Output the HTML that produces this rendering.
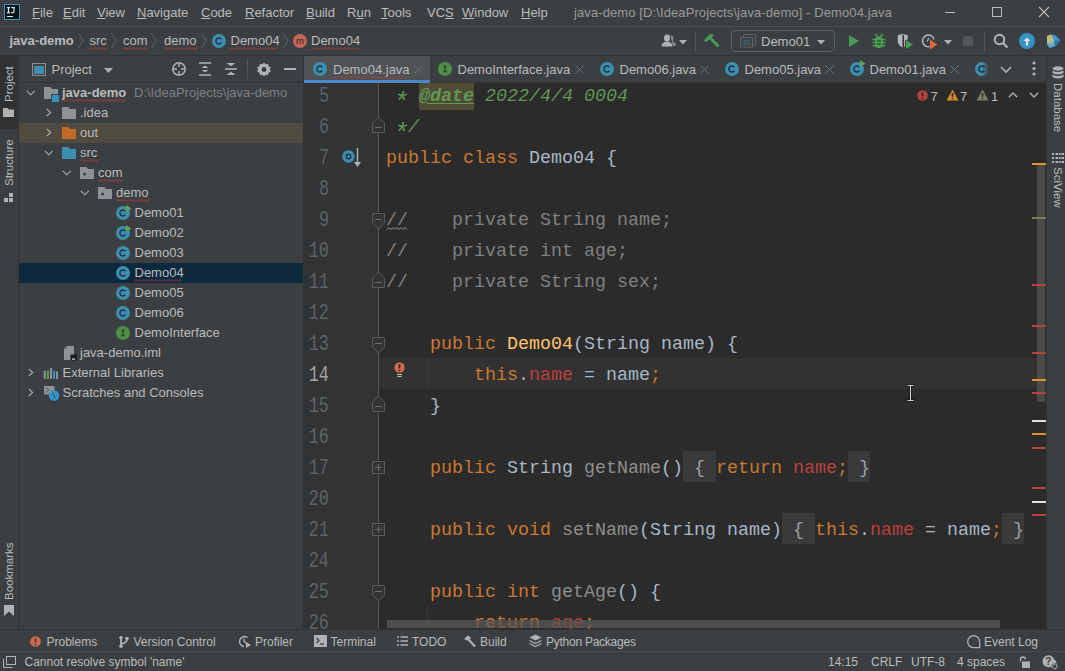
<!DOCTYPE html>
<html><head><meta charset="utf-8">
<style>
*{margin:0;padding:0;box-sizing:border-box}
html,body{width:1065px;height:671px;overflow:hidden;background:#3C3F41;font-family:"Liberation Sans",sans-serif;font-size:13px;color:#BBBBBB}
.a{position:absolute;white-space:pre}
svg.a{overflow:visible}
.mn{text-decoration:underline;text-underline-offset:1px;text-decoration-thickness:1px}
</style></head><body>
<div class="a" style="left:0px;top:0px;width:1065px;height:26px;background:#3C3F41;"></div>
<div class="a" style="left:4px;top:4px;width:16px;height:16px;background:#000;border:1px solid #3592C4"></div>
<svg class="a" style="left:4px;top:4px;" width="16" height="16" viewBox="0 0 16 16"><rect x="1" y="1" width="14" height="14" fill="#06121A"/><path d="M3 3.6h3M4.5 3.6v5M3 8.6h3M7.2 3.6h3.6M10 3.6v3.8q0 1.2-1.2 1.2h-1.6M3 12.5h6" stroke="#E6E6E6" stroke-width="1.2" fill="none"/></svg>
<div class="a" style="left:32px;top:4.50px;font-size:13px;line-height:16px;color:#BBBBBB;font-family:'Liberation Sans';"><span class="mn">F</span>ile</div>
<div class="a" style="left:63px;top:4.50px;font-size:13px;line-height:16px;color:#BBBBBB;font-family:'Liberation Sans';"><span class="mn">E</span>dit</div>
<div class="a" style="left:97px;top:4.50px;font-size:13px;line-height:16px;color:#BBBBBB;font-family:'Liberation Sans';"><span class="mn">V</span>iew</div>
<div class="a" style="left:137px;top:4.50px;font-size:13px;line-height:16px;color:#BBBBBB;font-family:'Liberation Sans';"><span class="mn">N</span>avigate</div>
<div class="a" style="left:201px;top:4.50px;font-size:13px;line-height:16px;color:#BBBBBB;font-family:'Liberation Sans';"><span class="mn">C</span>ode</div>
<div class="a" style="left:245px;top:4.50px;font-size:13px;line-height:16px;color:#BBBBBB;font-family:'Liberation Sans';"><span class="mn">R</span>efactor</div>
<div class="a" style="left:306px;top:4.50px;font-size:13px;line-height:16px;color:#BBBBBB;font-family:'Liberation Sans';"><span class="mn">B</span>uild</div>
<div class="a" style="left:347px;top:4.50px;font-size:13px;line-height:16px;color:#BBBBBB;font-family:'Liberation Sans';">R<span class="mn">u</span>n</div>
<div class="a" style="left:381px;top:4.50px;font-size:13px;line-height:16px;color:#BBBBBB;font-family:'Liberation Sans';"><span class="mn">T</span>ools</div>
<div class="a" style="left:427px;top:4.50px;font-size:13px;line-height:16px;color:#BBBBBB;font-family:'Liberation Sans';">VC<span class="mn">S</span></div>
<div class="a" style="left:462px;top:4.50px;font-size:13px;line-height:16px;color:#BBBBBB;font-family:'Liberation Sans';"><span class="mn">W</span>indow</div>
<div class="a" style="left:521px;top:4.50px;font-size:13px;line-height:16px;color:#BBBBBB;font-family:'Liberation Sans';"><span class="mn">H</span>elp</div>
<div class="a" style="left:574px;top:4.50px;font-size:13px;line-height:16px;color:#9A9A9A;font-family:'Liberation Sans';letter-spacing:0.1px;">java-demo [D:\IdeaProjects\java-demo] - Demo04.java</div>
<div class="a" style="left:945px;top:12px;width:10px;height:1px;background:#BBBBBB;"></div>
<div class="a" style="left:992px;top:7px;width:10px;height:10px;background:transparent;border:1px solid #BBBBBB"></div>
<svg class="a" style="left:1038px;top:6px;" width="12" height="12" viewBox="0 0 12 12"><path d="M1 1L11 11M11 1L1 11" stroke="#BBBBBB" stroke-width="1.1"/></svg>
<div class="a" style="left:0px;top:26px;width:1065px;height:1px;background:#4B4D4F;"></div>
<div class="a" style="left:9.5px;top:32.50px;font-size:13px;line-height:16px;color:#BBBBBB;font-weight:bold;font-family:'Liberation Sans';">java-demo</div>
<svg class="a" style="left:78px;top:33px;" width="6" height="16" viewBox="0 0 6 16"><path d="M0.5 0.5L5 7.5L0.5 15" stroke="#5E6060" stroke-width="1" fill="none"/></svg>
<svg class="a" style="left:111px;top:33px;" width="6" height="16" viewBox="0 0 6 16"><path d="M0.5 0.5L5 7.5L0.5 15" stroke="#5E6060" stroke-width="1" fill="none"/></svg>
<svg class="a" style="left:151px;top:33px;" width="6" height="16" viewBox="0 0 6 16"><path d="M0.5 0.5L5 7.5L0.5 15" stroke="#5E6060" stroke-width="1" fill="none"/></svg>
<svg class="a" style="left:201px;top:33px;" width="6" height="16" viewBox="0 0 6 16"><path d="M0.5 0.5L5 7.5L0.5 15" stroke="#5E6060" stroke-width="1" fill="none"/></svg>
<svg class="a" style="left:283px;top:33px;" width="6" height="16" viewBox="0 0 6 16"><path d="M0.5 0.5L5 7.5L0.5 15" stroke="#5E6060" stroke-width="1" fill="none"/></svg>
<div class="a" style="left:89.5px;top:32.50px;font-size:13px;line-height:16px;color:#BBBBBB;font-family:'Liberation Sans';">src</div>
<svg class="a" style="left:89px;top:47px;" width="19" height="4" viewBox="0 0 19 4"><polyline points="0,2.5 2,0.5 4,2.5 6,0.5 8,2.5 10,0.5 12,2.5 14,0.5 16,2.5 18,0.5" fill="none" stroke="#BC3F3C" stroke-width="1" opacity="0.85"/></svg>
<div class="a" style="left:123px;top:32.50px;font-size:13px;line-height:16px;color:#BBBBBB;font-family:'Liberation Sans';">com</div>
<svg class="a" style="left:123px;top:47px;" width="26" height="4" viewBox="0 0 26 4"><polyline points="0,2.5 2,0.5 4,2.5 6,0.5 8,2.5 10,0.5 12,2.5 14,0.5 16,2.5 18,0.5 20,2.5 22,0.5 24,2.5" fill="none" stroke="#BC3F3C" stroke-width="1" opacity="0.85"/></svg>
<div class="a" style="left:164px;top:32.50px;font-size:13px;line-height:16px;color:#BBBBBB;font-family:'Liberation Sans';">demo</div>
<svg class="a" style="left:164px;top:47px;" width="35" height="4" viewBox="0 0 35 4"><polyline points="0,2.5 2,0.5 4,2.5 6,0.5 8,2.5 10,0.5 12,2.5 14,0.5 16,2.5 18,0.5 20,2.5 22,0.5 24,2.5 26,0.5 28,2.5 30,0.5 32,2.5 34,0.5" fill="none" stroke="#BC3F3C" stroke-width="1" opacity="0.85"/></svg>
<svg class="a" style="left:212px;top:34px;" width="14" height="14" viewBox="0 0 14 14"><circle cx="7.0" cy="7.0" r="7.0" fill="#3E8EB0"/><path d="M9.3 5.2A3 3 0 1 0 9.3 8.8" fill="none" stroke="#1D3442" stroke-width="1.5"/></svg>
<div class="a" style="left:230.5px;top:32.50px;font-size:13px;line-height:16px;color:#BBBBBB;font-family:'Liberation Sans';">Demo04</div>
<svg class="a" style="left:230px;top:47px;" width="50" height="4" viewBox="0 0 50 4"><polyline points="0,2.5 2,0.5 4,2.5 6,0.5 8,2.5 10,0.5 12,2.5 14,0.5 16,2.5 18,0.5 20,2.5 22,0.5 24,2.5 26,0.5 28,2.5 30,0.5 32,2.5 34,0.5 36,2.5 38,0.5 40,2.5 42,0.5 44,2.5 46,0.5 48,2.5" fill="none" stroke="#BC3F3C" stroke-width="1" opacity="0.85"/></svg>
<svg class="a" style="left:293px;top:34px;" width="14" height="14" viewBox="0 0 14 14"><circle cx="7.0" cy="7.0" r="7.0" fill="#C2675A"/><text x="7.0" y="10.4" text-anchor="middle" font-family="Liberation Sans" font-size="9.5" fill="#3A2220">m</text></svg>
<div class="a" style="left:311px;top:32.50px;font-size:13px;line-height:16px;color:#BBBBBB;font-family:'Liberation Sans';">Demo04</div>
<svg class="a" style="left:311px;top:47px;" width="50" height="4" viewBox="0 0 50 4"><polyline points="0,2.5 2,0.5 4,2.5 6,0.5 8,2.5 10,0.5 12,2.5 14,0.5 16,2.5 18,0.5 20,2.5 22,0.5 24,2.5 26,0.5 28,2.5 30,0.5 32,2.5 34,0.5 36,2.5 38,0.5 40,2.5 42,0.5 44,2.5 46,0.5 48,2.5" fill="none" stroke="#BC3F3C" stroke-width="1" opacity="0.85"/></svg>
<svg class="a" style="left:661px;top:34px;" width="16" height="13" viewBox="0 0 16 13"><path d="M9.5 1.5a2.5 3 0 0 1 3 2.8q0 2-1.2 3q3.5 1 3.7 4.5h-3" fill="#8E9193"/><ellipse cx="6" cy="4" rx="3" ry="3.5" fill="#AFB1B3"/><path d="M0.5 12.5q0-4.5 5.5-5q5.5 0.5 5.5 5z" fill="#AFB1B3"/></svg>
<svg class="a" style="left:679px;top:40px;" width="8" height="5" viewBox="0 0 8 5"><path d="M0 0h8L4 4.5z" fill="#AFB1B3"/></svg>
<div class="a" style="left:695px;top:31px;width:1px;height:20px;background:#515658;"></div>
<svg class="a" style="left:703px;top:33px;" width="17" height="16" viewBox="0 0 17 16"><path d="M1 7.5L6.5 1.2H10.5V2.8L3 9.2Z" fill="#499C54"/><path d="M6.8 4.5L15.5 13.5" stroke="#499C54" stroke-width="2.8"/></svg>
<div class="a" style="left:731px;top:30px;width:104px;height:22px;background:transparent;border:1px solid #5E6060;border-radius:4px"></div>
<svg class="a" style="left:740px;top:34px;" width="16" height="14" viewBox="0 0 16 14"><path d="M3.5 3.5V0.5H15.5V11.5H12.5" stroke="#5E6163" fill="none"/><rect x="0.5" y="3.5" width="12" height="9.5" fill="none" stroke="#5E6163"/><rect x="2.5" y="5.5" width="8" height="5.5" fill="#3E5661"/></svg>
<div class="a" style="left:761px;top:33.50px;font-size:13px;line-height:16px;color:#BBBBBB;font-family:'Liberation Sans';">Demo01</div>
<svg class="a" style="left:817px;top:40px;" width="8" height="5" viewBox="0 0 8 5"><path d="M0 0h8L4 4.5z" fill="#AFB1B3"/></svg>
<svg class="a" style="left:849px;top:35px;" width="10" height="12" viewBox="0 0 10 12"><path d="M0 0L10 6L0 12z" fill="#499C54"/></svg>
<svg class="a" style="left:872px;top:33px;" width="14" height="16" viewBox="0 0 14 16"><path d="M3 1L6 4M11 1L8 4" stroke="#499C54" stroke-width="1.5"/><rect x="3" y="3.5" width="8" height="11.5" rx="3.5" fill="#499C54"/><path d="M0.5 6.5H13.5M0.5 9.5H13.5M0.5 12.8H13.5" stroke="#499C54" stroke-width="1.5"/><path d="M5 7.8H9M5 10.8H9" stroke="#2F4A33" stroke-width="1.3"/></svg>
<svg class="a" style="left:897px;top:34px;" width="17" height="16" viewBox="0 0 17 16"><path d="M0.8 1.2Q5.5 -0.5 10.8 1.2V5L8 6.5V12.5Q6 13 5 13.2Q0.8 11 0.8 7Z" fill="#B4B6B8"/><path d="M6.3 1.2V12.8" stroke="#2B2D2F" stroke-width="1.5"/><path d="M9 6L16 10.5L9 15Z" fill="#499C54"/></svg>
<svg class="a" style="left:921px;top:34px;" width="17" height="16" viewBox="0 0 17 16"><path d="M8.5 12.6A5.8 5.8 0 1 1 13 5.5" stroke="#B4B6B8" stroke-width="1.5" fill="none"/><path d="M7.8 3.8L6.2 7.5" stroke="#B4B6B8" stroke-width="1.2"/><path d="M9 5.5L16.5 10.5L9 15.5Z" fill="#D9693F"/></svg>
<svg class="a" style="left:944px;top:40px;" width="8" height="5" viewBox="0 0 8 5"><path d="M0 0h8L4 4.5z" fill="#AFB1B3"/></svg>
<div class="a" style="left:963px;top:36px;width:10px;height:10px;background:#55585A;"></div>
<div class="a" style="left:984px;top:31px;width:1px;height:20px;background:#515658;"></div>
<svg class="a" style="left:993px;top:33px;" width="16" height="16" viewBox="0 0 16 16"><circle cx="6.5" cy="6.5" r="4.8" fill="none" stroke="#B4B6B8" stroke-width="2"/><path d="M10 10L14.5 14.5" stroke="#B4B6B8" stroke-width="2.2"/></svg>
<svg class="a" style="left:1019px;top:33px;" width="16" height="16" viewBox="0 0 16 16"><circle cx="8" cy="8" r="8" fill="#3592C4"/><path d="M4.5 8L8 4.5L11.5 8Z" fill="#E6E6DF"/><path d="M8 7V12.5" stroke="#E6E6DF" stroke-width="2.2"/></svg>
<svg class="a" style="left:1046px;top:34px;" width="15" height="15" viewBox="0 0 15 15"><defs><linearGradient id="jbg" x1="0" y1="0" x2="0" y2="1"><stop offset="0" stop-color="#E9AE52"/><stop offset="0.5" stop-color="#A9C58F"/><stop offset="1" stop-color="#3E9AD6"/></linearGradient></defs><path d="M1 2L5 0.5L9 1L14.5 6.5L9 12.5L3.5 14L1 10Z" fill="#3E9AD6"/><path d="M9 6.5H14.5L9 12.5Z" fill="#2F6FA6"/><path d="M1 2L5 0.5L7.5 5V12.5L3.5 14L1 10Z" fill="url(#jbg)"/></svg>
<div class="a" style="left:0px;top:55px;width:1065px;height:1px;background:#323232;"></div>
<div class="a" style="left:0px;top:56px;width:18px;height:73px;background:#2F3133;"></div>
<div class="a" style="left:18px;top:56px;width:1px;height:573px;background:#323232;"></div>
<div class="a" style="left:3px;top:101.5px;font-size:11.5px;line-height:13.5px;color:#BBBBBB;transform-origin:0 0;transform:rotate(-90deg)">Project</div>
<svg class="a" style="left:3px;top:108px;" width="11" height="9" viewBox="0 0 11 9"><path d="M0 0h4.5l1.2 1.5H11V9H0z" fill="#AFB1B3"/></svg>
<div class="a" style="left:3px;top:186px;font-size:11.5px;line-height:13.5px;color:#BBBBBB;transform-origin:0 0;transform:rotate(-90deg)">Structure</div>
<svg class="a" style="left:4px;top:193px;" width="10" height="9" viewBox="0 0 10 9"><rect x="5" y="0" width="4" height="4" fill="#AFB1B3"/><rect x="0" y="5" width="4" height="4" fill="#AFB1B3"/><rect x="5" y="5" width="4" height="4" fill="#AFB1B3"/></svg>
<div class="a" style="left:3px;top:599.5px;font-size:11.5px;line-height:13.5px;color:#BBBBBB;transform-origin:0 0;transform:rotate(-90deg)">Bookmarks</div>
<svg class="a" style="left:4px;top:605px;" width="10" height="12" viewBox="0 0 10 12"><path d="M0 0h10v11L5 6.5L0 11z" fill="#AFB1B3"/></svg>
<svg class="a" style="left:32px;top:63px;" width="14" height="13" viewBox="0 0 14 13"><rect x="0.5" y="0.5" width="13" height="12" fill="none" stroke="#8A8D8F"/><rect x="2" y="3" width="10" height="8" fill="#3D8FAF"/></svg>
<div class="a" style="left:51.5px;top:61.50px;font-size:13px;line-height:16px;color:#BBBBBB;font-family:'Liberation Sans';">Project</div>
<svg class="a" style="left:104px;top:68px;" width="9" height="5" viewBox="0 0 9 5"><path d="M0 0h9L4.5 5z" fill="#AFB1B3"/></svg>
<svg class="a" style="left:172px;top:62px;" width="14" height="14" viewBox="0 0 14 14"><circle cx="7" cy="7" r="6.2" fill="none" stroke="#AFB1B3" stroke-width="1.5"/><path d="M7 1v4M7 9v4M1 7h4M9 7h4" stroke="#AFB1B3" stroke-width="1.5"/></svg>
<svg class="a" style="left:199px;top:62px;" width="12" height="14" viewBox="0 0 12 14"><path d="M0 1h12M0 13h12" stroke="#AFB1B3" stroke-width="1.6"/><path d="M2.5 6H9.5L6 3.5Z" fill="#AFB1B3"/><path d="M2.5 8H9.5L6 10.5Z" fill="#AFB1B3"/></svg>
<svg class="a" style="left:225px;top:62px;" width="12" height="14" viewBox="0 0 12 14"><path d="M0 7h12" stroke="#AFB1B3" stroke-width="1.6"/><path d="M1.5 1H10.5L6 4.2Z" fill="#AFB1B3"/><path d="M1.5 13H10.5L6 9.8Z" fill="#AFB1B3"/></svg>
<div class="a" style="left:247px;top:59px;width:1px;height:20px;background:#515658;"></div>
<svg class="a" style="left:257px;top:62px;" width="14" height="14" viewBox="0 0 14 14"><path d="M7 0.5L8.6 2.3L11 1.8L11.6 4.2L13.8 5.3L12.8 7.5L13.8 9.7L11.6 10.8L11 13.2L8.6 12.7L7 14.5L5.4 12.7L3 13.2L2.4 10.8L0.2 9.7L1.2 7.5L0.2 5.3L2.4 4.2L3 1.8L5.4 2.3Z" fill="#AFB1B3"/><circle cx="7" cy="7.5" r="2.4" fill="#3C3F41"/></svg>
<div class="a" style="left:284px;top:68px;width:12px;height:2px;background:#AFB1B3;"></div>
<div class="a" style="left:19px;top:82px;width:284px;height:1px;background:#323232;"></div>
<div class="a" style="left:19px;top:123px;width:284px;height:20px;background:#4F4B3F;"></div>
<div class="a" style="left:19px;top:263px;width:284px;height:20px;background:#0D293E;"></div>
<svg class="a" style="left:26px;top:90px;" width="10" height="6" viewBox="0 0 10 6"><path d="M0.8 0.8L4.8 4.8L8.8 0.8" stroke="#AFB1B3" stroke-width="1.1" fill="none"/></svg>
<svg class="a" style="left:44px;top:87px;" width="16" height="15" viewBox="0 0 16 15"><path d="M0 0h6.5l1.5 2h6v10H0z" fill="#8D9396"/><rect x="7" y="7" width="8" height="7" fill="#3C3F41"/><rect x="8" y="8" width="7" height="7" fill="#3592C4"/></svg>
<div class="a" style="left:62px;top:84.50px;font-size:13px;line-height:16px;color:#BBBBBB;font-weight:bold;font-family:'Liberation Sans';">java-demo</div>
<svg class="a" style="left:62px;top:99px;" width="66" height="4" viewBox="0 0 66 4"><polyline points="0,2.5 2,0.5 4,2.5 6,0.5 8,2.5 10,0.5 12,2.5 14,0.5 16,2.5 18,0.5 20,2.5 22,0.5 24,2.5 26,0.5 28,2.5 30,0.5 32,2.5 34,0.5 36,2.5 38,0.5 40,2.5 42,0.5 44,2.5 46,0.5 48,2.5 50,0.5 52,2.5 54,0.5 56,2.5 58,0.5 60,2.5 62,0.5 64,2.5" fill="none" stroke="#BC3F3C" stroke-width="1" opacity="0.85"/></svg>
<div class="a" style="left:134px;top:84.50px;font-size:13px;line-height:16px;color:#7F8184;font-family:'Liberation Sans';">D:\IdeaProjects\java-demo</div>
<svg class="a" style="left:46px;top:108px;" width="6" height="9" viewBox="0 0 6 9"><path d="M0.8 0.8L4.6 4.5L0.8 8.2" stroke="#AFB1B3" stroke-width="1.1" fill="none"/></svg>
<svg class="a" style="left:62px;top:107px;" width="14" height="12" viewBox="0 0 14 12"><path d="M0 0h6.5l1.5 2h6v10H0z" fill="#8D9396"/></svg>
<div class="a" style="left:80px;top:104.50px;font-size:13px;line-height:16px;color:#BBBBBB;font-family:'Liberation Sans';">.idea</div>
<svg class="a" style="left:46px;top:128px;" width="6" height="9" viewBox="0 0 6 9"><path d="M0.8 0.8L4.6 4.5L0.8 8.2" stroke="#AFB1B3" stroke-width="1.1" fill="none"/></svg>
<svg class="a" style="left:62px;top:127px;" width="14" height="12" viewBox="0 0 14 12"><path d="M0 0h6.5l1.5 2h6v10H0z" fill="#C06A2C"/></svg>
<div class="a" style="left:80px;top:124.50px;font-size:13px;line-height:16px;color:#BBBBBB;font-family:'Liberation Sans';">out</div>
<svg class="a" style="left:44px;top:150px;" width="10" height="6" viewBox="0 0 10 6"><path d="M0.8 0.8L4.8 4.8L8.8 0.8" stroke="#AFB1B3" stroke-width="1.1" fill="none"/></svg>
<svg class="a" style="left:62px;top:147px;" width="14" height="12" viewBox="0 0 14 12"><path d="M0 0h6.5l1.5 2h6v10H0z" fill="#3D8FAF"/></svg>
<div class="a" style="left:80px;top:144.50px;font-size:13px;line-height:16px;color:#BBBBBB;font-family:'Liberation Sans';">src</div>
<svg class="a" style="left:80px;top:159px;" width="19" height="4" viewBox="0 0 19 4"><polyline points="0,2.5 2,0.5 4,2.5 6,0.5 8,2.5 10,0.5 12,2.5 14,0.5 16,2.5 18,0.5" fill="none" stroke="#BC3F3C" stroke-width="1" opacity="0.85"/></svg>
<svg class="a" style="left:62px;top:170px;" width="10" height="6" viewBox="0 0 10 6"><path d="M0.8 0.8L4.8 4.8L8.8 0.8" stroke="#AFB1B3" stroke-width="1.1" fill="none"/></svg>
<svg class="a" style="left:80px;top:167px;" width="14" height="12" viewBox="0 0 14 12"><path d="M0 0h6.5l1.5 2h6v10H0z" fill="#8D9396"/><circle cx="4.5" cy="7" r="1.5" fill="#3C3F41"/></svg>
<div class="a" style="left:98px;top:164.50px;font-size:13px;line-height:16px;color:#BBBBBB;font-family:'Liberation Sans';">com</div>
<svg class="a" style="left:98px;top:179px;" width="25" height="4" viewBox="0 0 25 4"><polyline points="0,2.5 2,0.5 4,2.5 6,0.5 8,2.5 10,0.5 12,2.5 14,0.5 16,2.5 18,0.5 20,2.5 22,0.5 24,2.5" fill="none" stroke="#BC3F3C" stroke-width="1" opacity="0.85"/></svg>
<svg class="a" style="left:80px;top:190px;" width="10" height="6" viewBox="0 0 10 6"><path d="M0.8 0.8L4.8 4.8L8.8 0.8" stroke="#AFB1B3" stroke-width="1.1" fill="none"/></svg>
<svg class="a" style="left:98px;top:187px;" width="14" height="12" viewBox="0 0 14 12"><path d="M0 0h6.5l1.5 2h6v10H0z" fill="#8D9396"/><circle cx="4.5" cy="7" r="1.5" fill="#3C3F41"/></svg>
<div class="a" style="left:116px;top:184.50px;font-size:13px;line-height:16px;color:#BBBBBB;font-family:'Liberation Sans';">demo</div>
<svg class="a" style="left:116px;top:199px;" width="35" height="4" viewBox="0 0 35 4"><polyline points="0,2.5 2,0.5 4,2.5 6,0.5 8,2.5 10,0.5 12,2.5 14,0.5 16,2.5 18,0.5 20,2.5 22,0.5 24,2.5 26,0.5 28,2.5 30,0.5 32,2.5 34,0.5" fill="none" stroke="#BC3F3C" stroke-width="1" opacity="0.85"/></svg>
<svg class="a" style="left:116px;top:206px;" width="14" height="14" viewBox="0 0 14 14"><circle cx="7.0" cy="7.0" r="7.0" fill="#3E8EB0"/><path d="M9.3 5.2A3 3 0 1 0 9.3 8.8" fill="none" stroke="#1D3442" stroke-width="1.5"/></svg>
<svg class="a" style="left:126px;top:205px;" width="6" height="7" viewBox="0 0 6 7"><path d="M0 0L5.5 3.5L0 7z" fill="#5DA550"/></svg>
<div class="a" style="left:134.5px;top:204.50px;font-size:13px;line-height:16px;color:#BBBBBB;font-family:'Liberation Sans';">Demo01</div>
<svg class="a" style="left:116px;top:226px;" width="14" height="14" viewBox="0 0 14 14"><circle cx="7.0" cy="7.0" r="7.0" fill="#3E8EB0"/><path d="M9.3 5.2A3 3 0 1 0 9.3 8.8" fill="none" stroke="#1D3442" stroke-width="1.5"/></svg>
<svg class="a" style="left:126px;top:225px;" width="6" height="7" viewBox="0 0 6 7"><path d="M0 0L5.5 3.5L0 7z" fill="#5DA550"/></svg>
<div class="a" style="left:134.5px;top:224.50px;font-size:13px;line-height:16px;color:#BBBBBB;font-family:'Liberation Sans';">Demo02</div>
<svg class="a" style="left:116px;top:246px;" width="14" height="14" viewBox="0 0 14 14"><circle cx="7.0" cy="7.0" r="7.0" fill="#3E8EB0"/><path d="M9.3 5.2A3 3 0 1 0 9.3 8.8" fill="none" stroke="#1D3442" stroke-width="1.5"/></svg>
<div class="a" style="left:134.5px;top:244.50px;font-size:13px;line-height:16px;color:#BBBBBB;font-family:'Liberation Sans';">Demo03</div>
<svg class="a" style="left:116px;top:266px;" width="14" height="14" viewBox="0 0 14 14"><circle cx="7.0" cy="7.0" r="7.0" fill="#3E8EB0"/><path d="M9.3 5.2A3 3 0 1 0 9.3 8.8" fill="none" stroke="#1D3442" stroke-width="1.5"/></svg>
<div class="a" style="left:134.5px;top:264.50px;font-size:13px;line-height:16px;color:#BBBBBB;font-family:'Liberation Sans';">Demo04</div>
<svg class="a" style="left:116px;top:286px;" width="14" height="14" viewBox="0 0 14 14"><circle cx="7.0" cy="7.0" r="7.0" fill="#3E8EB0"/><path d="M9.3 5.2A3 3 0 1 0 9.3 8.8" fill="none" stroke="#1D3442" stroke-width="1.5"/></svg>
<div class="a" style="left:134.5px;top:284.50px;font-size:13px;line-height:16px;color:#BBBBBB;font-family:'Liberation Sans';">Demo05</div>
<svg class="a" style="left:116px;top:306px;" width="14" height="14" viewBox="0 0 14 14"><circle cx="7.0" cy="7.0" r="7.0" fill="#3E8EB0"/><path d="M9.3 5.2A3 3 0 1 0 9.3 8.8" fill="none" stroke="#1D3442" stroke-width="1.5"/></svg>
<div class="a" style="left:134.5px;top:304.50px;font-size:13px;line-height:16px;color:#BBBBBB;font-family:'Liberation Sans';">Demo06</div>
<svg class="a" style="left:134px;top:279px;" width="50" height="4" viewBox="0 0 50 4"><polyline points="0,2.5 2,0.5 4,2.5 6,0.5 8,2.5 10,0.5 12,2.5 14,0.5 16,2.5 18,0.5 20,2.5 22,0.5 24,2.5 26,0.5 28,2.5 30,0.5 32,2.5 34,0.5 36,2.5 38,0.5 40,2.5 42,0.5 44,2.5 46,0.5 48,2.5" fill="none" stroke="#BC3F3C" stroke-width="1" opacity="0.85"/></svg>
<svg class="a" style="left:116px;top:326px;" width="14" height="14" viewBox="0 0 14 14"><circle cx="7.0" cy="7.0" r="7.0" fill="#4E8F46"/><path d="M5.3 4.3H8.7M7 4.3V9.7M5.3 9.7H8.7" fill="none" stroke="#1E2E1E" stroke-width="1.1"/></svg>
<div class="a" style="left:134.5px;top:324.50px;font-size:13px;line-height:16px;color:#BBBBBB;font-family:'Liberation Sans';">DemoInterface</div>
<svg class="a" style="left:64px;top:346px;" width="13" height="15" viewBox="0 0 13 15"><path d="M3 0H10V14H0V3Z" fill="#8D9396"/><path d="M0 3L3 0V3Z" fill="#6E7375"/><rect x="6.5" y="8.5" width="6.5" height="6" fill="#1A1A1A"/><rect x="8" y="12.5" width="3.2" height="1.2" fill="#DDD"/></svg>
<div class="a" style="left:80px;top:344.50px;font-size:13px;line-height:16px;color:#BBBBBB;font-family:'Liberation Sans';">java-demo.iml</div>
<svg class="a" style="left:28px;top:368px;" width="6" height="9" viewBox="0 0 6 9"><path d="M0.8 0.8L4.6 4.5L0.8 8.2" stroke="#AFB1B3" stroke-width="1.1" fill="none"/></svg>
<svg class="a" style="left:43px;top:365px;" width="15" height="14" viewBox="0 0 15 14"><path d="M1.8 5.5V14M8 3V14M14 6.5V14" stroke="#8D9396" stroke-width="2"/><path d="M4.9 5.5V14" stroke="#5DA550" stroke-width="2"/><path d="M11 5.5V14" stroke="#3592C4" stroke-width="2"/></svg>
<div class="a" style="left:62.5px;top:364.50px;font-size:13px;line-height:16px;color:#BBBBBB;font-family:'Liberation Sans';">External Libraries</div>
<svg class="a" style="left:28px;top:388px;" width="6" height="9" viewBox="0 0 6 9"><path d="M0.8 0.8L4.6 4.5L0.8 8.2" stroke="#AFB1B3" stroke-width="1.1" fill="none"/></svg>
<svg class="a" style="left:43px;top:386px;" width="17" height="16" viewBox="0 0 17 16"><rect x="1" y="0" width="10.5" height="8.5" fill="#8D9396"/><path d="M2.5 1.5L6 4L2.5 6.5" stroke="#5A5E60" stroke-width="1" fill="none"/><circle cx="11" cy="9.5" r="5.2" fill="#3592C4"/><path d="M10 7.5L11.5 11L12.5 11.5" stroke="#1F4F73" stroke-width="1" fill="none"/></svg>
<div class="a" style="left:62.5px;top:384.50px;font-size:13px;line-height:16px;color:#BBBBBB;font-family:'Liberation Sans';">Scratches and Consoles</div>
<div class="a" style="left:303px;top:56px;width:1px;height:573px;background:#323232;"></div>
<div class="a" style="left:304px;top:56px;width:742px;height:26px;background:#3C3F41;"></div>
<div class="a" style="left:304px;top:56px;width:126px;height:24px;background:#4E5254;"></div>
<div class="a" style="left:304px;top:80px;width:126px;height:3px;background:#4A88C7;"></div>
<div class="a" style="left:430px;top:82px;width:616px;height:1px;background:#323232;"></div>
<svg class="a" style="left:313px;top:62px;" width="14" height="14" viewBox="0 0 14 14"><circle cx="7.0" cy="7.0" r="7.0" fill="#3E8EB0"/><path d="M9.3 5.2A3 3 0 1 0 9.3 8.8" fill="none" stroke="#1D3442" stroke-width="1.5"/></svg>
<div class="a" style="left:333px;top:61.50px;font-size:13px;line-height:16px;color:#BBBBBB;font-family:'Liberation Sans';">Demo04.java</div>
<svg class="a" style="left:414px;top:65px;" width="9" height="9" viewBox="0 0 9 9"><path d="M0.5 0.5L8.5 8.5M8.5 0.5L0.5 8.5" stroke="#6B7074" stroke-width="1"/></svg>
<svg class="a" style="left:333px;top:76px;" width="75" height="4" viewBox="0 0 75 4"><polyline points="0,2.5 2,0.5 4,2.5 6,0.5 8,2.5 10,0.5 12,2.5 14,0.5 16,2.5 18,0.5 20,2.5 22,0.5 24,2.5 26,0.5 28,2.5 30,0.5 32,2.5 34,0.5 36,2.5 38,0.5 40,2.5 42,0.5 44,2.5 46,0.5 48,2.5 50,0.5 52,2.5 54,0.5 56,2.5 58,0.5 60,2.5 62,0.5 64,2.5 66,0.5 68,2.5 70,0.5 72,2.5 74,0.5" fill="none" stroke="#BC3F3C" stroke-width="1" opacity="0.85"/></svg>
<svg class="a" style="left:438px;top:62px;" width="14" height="14" viewBox="0 0 14 14"><circle cx="7.0" cy="7.0" r="7.0" fill="#4E8F46"/><path d="M5.3 4.3H8.7M7 4.3V9.7M5.3 9.7H8.7" fill="none" stroke="#1E2E1E" stroke-width="1.1"/></svg>
<div class="a" style="left:457.5px;top:61.50px;font-size:13px;line-height:16px;color:#BBBBBB;font-family:'Liberation Sans';">DemoInterface.java</div>
<svg class="a" style="left:575px;top:65px;" width="9" height="9" viewBox="0 0 9 9"><path d="M0.5 0.5L8.5 8.5M8.5 0.5L0.5 8.5" stroke="#6B7074" stroke-width="1"/></svg>
<svg class="a" style="left:600px;top:62px;" width="14" height="14" viewBox="0 0 14 14"><circle cx="7.0" cy="7.0" r="7.0" fill="#3E8EB0"/><path d="M9.3 5.2A3 3 0 1 0 9.3 8.8" fill="none" stroke="#1D3442" stroke-width="1.5"/></svg>
<div class="a" style="left:619.5px;top:61.50px;font-size:13px;line-height:16px;color:#BBBBBB;font-family:'Liberation Sans';">Demo06.java</div>
<svg class="a" style="left:700px;top:65px;" width="9" height="9" viewBox="0 0 9 9"><path d="M0.5 0.5L8.5 8.5M8.5 0.5L0.5 8.5" stroke="#6B7074" stroke-width="1"/></svg>
<svg class="a" style="left:725px;top:62px;" width="14" height="14" viewBox="0 0 14 14"><circle cx="7.0" cy="7.0" r="7.0" fill="#3E8EB0"/><path d="M9.3 5.2A3 3 0 1 0 9.3 8.8" fill="none" stroke="#1D3442" stroke-width="1.5"/></svg>
<div class="a" style="left:744.5px;top:61.50px;font-size:13px;line-height:16px;color:#BBBBBB;font-family:'Liberation Sans';">Demo05.java</div>
<svg class="a" style="left:825px;top:65px;" width="9" height="9" viewBox="0 0 9 9"><path d="M0.5 0.5L8.5 8.5M8.5 0.5L0.5 8.5" stroke="#6B7074" stroke-width="1"/></svg>
<svg class="a" style="left:850px;top:62px;" width="14" height="14" viewBox="0 0 14 14"><circle cx="7.0" cy="7.0" r="7.0" fill="#3E8EB0"/><path d="M9.3 5.2A3 3 0 1 0 9.3 8.8" fill="none" stroke="#1D3442" stroke-width="1.5"/></svg>
<svg class="a" style="left:860px;top:60px;" width="6" height="7" viewBox="0 0 6 7"><path d="M0 0L5.5 3.5L0 7z" fill="#5DA550"/></svg>
<div class="a" style="left:869.5px;top:61.50px;font-size:13px;line-height:16px;color:#BBBBBB;font-family:'Liberation Sans';">Demo01.java</div>
<svg class="a" style="left:950px;top:65px;" width="9" height="9" viewBox="0 0 9 9"><path d="M0.5 0.5L8.5 8.5M8.5 0.5L0.5 8.5" stroke="#6B7074" stroke-width="1"/></svg>
<svg class="a" style="left:975px;top:62px;" width="14" height="14" viewBox="0 0 14 14"><defs><linearGradient id="fd" x1="0" x2="1"><stop offset="0.5" stop-color="#3E8EB0"/><stop offset="1" stop-color="#3C3F41"/></linearGradient></defs><circle cx="7" cy="7" r="7" fill="url(#fd)"/><path d="M9.3 5.2A3 3 0 1 0 9.3 8.8" fill="none" stroke="#1D3442" stroke-width="1.5"/></svg>
<svg class="a" style="left:1000px;top:66px;" width="12" height="8" viewBox="0 0 12 8"><path d="M1 1L6 6L11 1" stroke="#AFB1B3" stroke-width="1.6" fill="none"/></svg>
<svg class="a" style="left:1032px;top:61px;" width="4" height="15" viewBox="0 0 4 15"><circle cx="2" cy="2" r="1.6" fill="#AFB1B3"/><circle cx="2" cy="7.5" r="1.6" fill="#AFB1B3"/><circle cx="2" cy="13" r="1.6" fill="#AFB1B3"/></svg>
<div class="a" style="left:304px;top:83px;width:742px;height:546px;background:#2B2B2B;overflow:hidden">
<div class="a" style="left:0px;top:0px;width:74px;height:546px;background:#313335;"></div>
<div class="a" style="left:75px;top:275px;width:667px;height:31px;background:#323232;"></div>
<div class="a" style="left:123px;top:275px;width:1px;height:31px;background:#3B3D3B;"></div>
<div class="a" style="left:123px;top:523px;width:1px;height:31px;background:#373737;"></div>
<div class="a" style="left:115px;top:-4px;width:55px;height:31px;background:#4F4C35;"></div>
<div class="a" style="left:379px;top:368px;width:33px;height:31px;background:#3A3A3A;"></div>
<div class="a" style="left:544px;top:368px;width:22px;height:31px;background:#3A3A3A;"></div>
<div class="a" style="left:478px;top:430px;width:33px;height:31px;background:#3A3A3A;"></div>
<div class="a" style="left:698px;top:430px;width:22px;height:31px;background:#3A3A3A;"></div>
<div class="a" style="left:74px;top:0px;width:1px;height:546px;background:#555555;"></div>
<svg class="a" style="left:68px;top:33px" width="13" height="17" viewBox="0 0 13 17"><path d="M0.5 16.5H12.5V7L6.5 1L0.5 7Z" fill="#313335" stroke="#5A5A5A"/><path d="M3 11.5H10" stroke="#6A6A6A"/></svg>
<svg class="a" style="left:68px;top:130px" width="13" height="17" viewBox="0 0 13 17"><path d="M0.5 0.5H12.5V10L6.5 16L0.5 10Z" fill="#313335" stroke="#5A5A5A"/><path d="M3 6.5H10" stroke="#6A6A6A"/></svg>
<svg class="a" style="left:68px;top:188px" width="13" height="17" viewBox="0 0 13 17"><path d="M0.5 16.5H12.5V7L6.5 1L0.5 7Z" fill="#313335" stroke="#5A5A5A"/><path d="M3 11.5H10" stroke="#6A6A6A"/></svg>
<svg class="a" style="left:68px;top:254px" width="13" height="17" viewBox="0 0 13 17"><path d="M0.5 0.5H12.5V10L6.5 16L0.5 10Z" fill="#313335" stroke="#5A5A5A"/><path d="M3 6.5H10" stroke="#6A6A6A"/></svg>
<svg class="a" style="left:68px;top:312px" width="13" height="17" viewBox="0 0 13 17"><path d="M0.5 16.5H12.5V7L6.5 1L0.5 7Z" fill="#313335" stroke="#5A5A5A"/><path d="M3 11.5H10" stroke="#6A6A6A"/></svg>
<svg class="a" style="left:68px;top:378px" width="13" height="13" viewBox="0 0 13 13"><rect x="0.5" y="0.5" width="12" height="12" fill="#313335" stroke="#5A5A5A"/><path d="M3 6.5H10M6.5 3V10" stroke="#6A6A6A"/></svg>
<svg class="a" style="left:68px;top:440px" width="13" height="13" viewBox="0 0 13 13"><rect x="0.5" y="0.5" width="12" height="12" fill="#313335" stroke="#5A5A5A"/><path d="M3 6.5H10M6.5 3V10" stroke="#6A6A6A"/></svg>
<svg class="a" style="left:68px;top:502px" width="13" height="17" viewBox="0 0 13 17"><path d="M0.5 0.5H12.5V10L6.5 16L0.5 10Z" fill="#313335" stroke="#5A5A5A"/><path d="M3 6.5H10" stroke="#6A6A6A"/></svg>
<svg class="a" style="left:38px;top:66px" width="21" height="19" viewBox="0 0 21 19"><circle cx="6.5" cy="7.5" r="6.2" fill="#3E8EB0"/><circle cx="6.5" cy="7.5" r="2.2" fill="none" stroke="#1D3442" stroke-width="1.4"/><path d="M15.5 -1V13.5" stroke="#AFB1B3" stroke-width="1.5"/><path d="M12 13H19L15.5 18Z" fill="#AFB1B3"/></svg>
<svg class="a" style="left:90px;top:279px" width="12" height="17" viewBox="0 0 12 17"><circle cx="5.5" cy="5.5" r="5.2" fill="#D0694D"/><path d="M5.5 2.3V6.3" stroke="#2B2B2B" stroke-width="1.8"/><circle cx="5.5" cy="8.4" r="0.9" fill="#2B2B2B"/><path d="M3 12.5H8M3.5 14.5H7.5" stroke="#C8C8C8" stroke-width="1"/></svg>
<div class="a" style="left:14.90px;top:-3px;font-family:'Liberation Mono';font-size:16.8px;line-height:31px;height:31px;color:#606366;padding-top:2px;transform:scaleY(1.27);transform-origin:0 22px">5</div>
<div class="a" style="left:14.90px;top:28px;font-family:'Liberation Mono';font-size:16.8px;line-height:31px;height:31px;color:#606366;padding-top:2px;transform:scaleY(1.27);transform-origin:0 22px">6</div>
<div class="a" style="left:14.90px;top:59px;font-family:'Liberation Mono';font-size:16.8px;line-height:31px;height:31px;color:#606366;padding-top:2px;transform:scaleY(1.27);transform-origin:0 22px">7</div>
<div class="a" style="left:14.90px;top:90px;font-family:'Liberation Mono';font-size:16.8px;line-height:31px;height:31px;color:#606366;padding-top:2px;transform:scaleY(1.27);transform-origin:0 22px">8</div>
<div class="a" style="left:14.90px;top:121px;font-family:'Liberation Mono';font-size:16.8px;line-height:31px;height:31px;color:#606366;padding-top:2px;transform:scaleY(1.27);transform-origin:0 22px">9</div>
<div class="a" style="left:4.80px;top:152px;font-family:'Liberation Mono';font-size:16.8px;line-height:31px;height:31px;color:#606366;padding-top:2px;transform:scaleY(1.27);transform-origin:0 22px">10</div>
<div class="a" style="left:4.80px;top:183px;font-family:'Liberation Mono';font-size:16.8px;line-height:31px;height:31px;color:#606366;padding-top:2px;transform:scaleY(1.27);transform-origin:0 22px">11</div>
<div class="a" style="left:4.80px;top:214px;font-family:'Liberation Mono';font-size:16.8px;line-height:31px;height:31px;color:#606366;padding-top:2px;transform:scaleY(1.27);transform-origin:0 22px">12</div>
<div class="a" style="left:4.80px;top:245px;font-family:'Liberation Mono';font-size:16.8px;line-height:31px;height:31px;color:#606366;padding-top:2px;transform:scaleY(1.27);transform-origin:0 22px">13</div>
<div class="a" style="left:4.80px;top:276px;font-family:'Liberation Mono';font-size:16.8px;line-height:31px;height:31px;color:#A4A3A3;padding-top:2px;transform:scaleY(1.27);transform-origin:0 22px">14</div>
<div class="a" style="left:4.80px;top:307px;font-family:'Liberation Mono';font-size:16.8px;line-height:31px;height:31px;color:#606366;padding-top:2px;transform:scaleY(1.27);transform-origin:0 22px">15</div>
<div class="a" style="left:4.80px;top:338px;font-family:'Liberation Mono';font-size:16.8px;line-height:31px;height:31px;color:#606366;padding-top:2px;transform:scaleY(1.27);transform-origin:0 22px">16</div>
<div class="a" style="left:4.80px;top:369px;font-family:'Liberation Mono';font-size:16.8px;line-height:31px;height:31px;color:#606366;padding-top:2px;transform:scaleY(1.27);transform-origin:0 22px">17</div>
<div class="a" style="left:4.80px;top:400px;font-family:'Liberation Mono';font-size:16.8px;line-height:31px;height:31px;color:#606366;padding-top:2px;transform:scaleY(1.27);transform-origin:0 22px">20</div>
<div class="a" style="left:4.80px;top:431px;font-family:'Liberation Mono';font-size:16.8px;line-height:31px;height:31px;color:#606366;padding-top:2px;transform:scaleY(1.27);transform-origin:0 22px">21</div>
<div class="a" style="left:4.80px;top:462px;font-family:'Liberation Mono';font-size:16.8px;line-height:31px;height:31px;color:#606366;padding-top:2px;transform:scaleY(1.27);transform-origin:0 22px">24</div>
<div class="a" style="left:4.80px;top:493px;font-family:'Liberation Mono';font-size:16.8px;line-height:31px;height:31px;color:#606366;padding-top:2px;transform:scaleY(1.27);transform-origin:0 22px">25</div>
<div class="a" style="left:4.80px;top:524px;font-family:'Liberation Mono';font-size:16.8px;line-height:31px;height:31px;color:#606366;padding-top:2px;transform:scaleY(1.27);transform-origin:0 22px">26</div>
<div class="a" style="left:82px;top:-4px;font-family:'Liberation Mono';font-size:18.33px;line-height:31px;height:31px;padding-top:1.5px;font-style:italic;"><span style="color:#629755;"> </span><span style="display:inline-block;width:11px;color:#629755;transform:translate(-1.5px,6.8px) scale(1.4);transform-origin:50% 50%">*</span><span style="color:#629755;"> </span><span style="color:#629755;text-decoration:underline;text-underline-offset:2px;font-weight:bold">@date</span><span style="color:#629755;"> 2022/4/4 0004</span></div>
<div class="a" style="left:82px;top:27px;font-family:'Liberation Mono';font-size:18.33px;line-height:31px;height:31px;padding-top:1.5px;font-style:italic;"><span style="color:#629755;"> </span><span style="display:inline-block;width:11px;color:#629755;transform:translate(-1.5px,6.8px) scale(1.4);transform-origin:50% 50%">*</span><span style="color:#629755;">/</span></div>
<div class="a" style="left:82px;top:58px;font-family:'Liberation Mono';font-size:18.33px;line-height:31px;height:31px;padding-top:1.5px;"><span style="color:#CC7832;">public class </span><span style="color:#A9B7C6;">Demo04 {</span></div>
<div class="a" style="left:82px;top:120px;font-family:'Liberation Mono';font-size:18.33px;line-height:31px;height:31px;padding-top:1.5px;"><span style="color:#808080;">//    private String name;</span></div>
<div class="a" style="left:82px;top:151px;font-family:'Liberation Mono';font-size:18.33px;line-height:31px;height:31px;padding-top:1.5px;"><span style="color:#808080;">//    private int age;</span></div>
<div class="a" style="left:82px;top:182px;font-family:'Liberation Mono';font-size:18.33px;line-height:31px;height:31px;padding-top:1.5px;"><span style="color:#808080;">//    private String sex;</span></div>
<div class="a" style="left:82px;top:244px;font-family:'Liberation Mono';font-size:18.33px;line-height:31px;height:31px;padding-top:1.5px;"><span style="color:#CC7832;">    public </span><span style="color:#FFC66D;">Demo04</span><span style="color:#A9B7C6;">(String name) {</span></div>
<div class="a" style="left:82px;top:275px;font-family:'Liberation Mono';font-size:18.33px;line-height:31px;height:31px;padding-top:1.5px;"><span style="color:#CC7832;">        this</span><span style="color:#A9B7C6;">.</span><span style="color:#BC3F3C;">name</span><span style="color:#A9B7C6;"> = name</span><span style="color:#CC7832;">;</span></div>
<div class="a" style="left:82px;top:306px;font-family:'Liberation Mono';font-size:18.33px;line-height:31px;height:31px;padding-top:1.5px;"><span style="color:#A9B7C6;">    }</span></div>
<div class="a" style="left:82px;top:368px;font-family:'Liberation Mono';font-size:18.33px;line-height:31px;height:31px;padding-top:1.5px;"><span style="color:#CC7832;">    public </span><span style="color:#A9B7C6;">String </span><span style="color:#8E8E8E;">getName</span><span style="color:#A9B7C6;">() </span><span style="color:#9CA3A8;">{</span><span style="color:#CC7832;"> return </span><span style="color:#BC3F3C;">name</span><span style="color:#CC7832;">;</span><span style="color:#9CA3A8;"> }</span></div>
<div class="a" style="left:82px;top:430px;font-family:'Liberation Mono';font-size:18.33px;line-height:31px;height:31px;padding-top:1.5px;"><span style="color:#CC7832;">    public void </span><span style="color:#8E8E8E;">setName</span><span style="color:#A9B7C6;">(String name) </span><span style="color:#9CA3A8;">{</span><span style="color:#CC7832;"> this</span><span style="color:#A9B7C6;">.</span><span style="color:#BC3F3C;">name</span><span style="color:#A9B7C6;"> = name</span><span style="color:#CC7832;">;</span><span style="color:#9CA3A8;"> }</span></div>
<div class="a" style="left:82px;top:492px;font-family:'Liberation Mono';font-size:18.33px;line-height:31px;height:31px;padding-top:1.5px;"><span style="color:#CC7832;">    public int </span><span style="color:#8E8E8E;">getAge</span><span style="color:#A9B7C6;">() {</span></div>
<div class="a" style="left:82px;top:523px;font-family:'Liberation Mono';font-size:18.33px;line-height:31px;height:31px;padding-top:1.5px;"><span style="color:#CC7832;">        return </span><span style="color:#BC3F3C;">age</span><span style="color:#CC7832;">;</span></div>
<svg class="a" style="left:83px;top:144px" width="22" height="4" viewBox="0 0 22 4"><polyline points="0,2.5 2,0.5 4,2.5 6,0.5 8,2.5 10,0.5 12,2.5 14,0.5 16,2.5 18,0.5 20,2.5" fill="none" stroke="#9A9A9A" stroke-width="1"/></svg>
<div class="a" style="left:83px;top:537px;width:613px;height:8px;background:rgba(90,90,90,0.75);"></div>
<div class="a" style="left:733px;top:81px;width:8px;height:238px;background:#4A4A4A;"></div>
<div class="a" style="left:728px;top:80px;width:14px;height:2px;background:#E0952F;"></div>
<div class="a" style="left:728px;top:134px;width:14px;height:2px;background:#7C7C5A;"></div>
<div class="a" style="left:728px;top:201px;width:14px;height:2px;background:#B8433C;"></div>
<div class="a" style="left:728px;top:242px;width:14px;height:2px;background:#B8433C;"></div>
<div class="a" style="left:728px;top:269px;width:14px;height:2px;background:#B8433C;"></div>
<div class="a" style="left:728px;top:296px;width:14px;height:2px;background:#E0952F;"></div>
<div class="a" style="left:728px;top:309px;width:14px;height:2px;background:#B8433C;"></div>
<div class="a" style="left:728px;top:337px;width:14px;height:2px;background:#DDE3E0;"></div>
<div class="a" style="left:728px;top:350px;width:14px;height:2px;background:#E0952F;"></div>
<div class="a" style="left:728px;top:364px;width:14px;height:2px;background:#B8433C;"></div>
<div class="a" style="left:728px;top:404px;width:14px;height:2px;background:#B8433C;"></div>
<div class="a" style="left:728px;top:418px;width:14px;height:2px;background:#DDE3E0;"></div>
<div class="a" style="left:728px;top:431px;width:14px;height:2px;background:#B8433C;"></div>
<svg class="a" style="left:602px;top:301px" width="10" height="18" viewBox="0 0 10 18"><path d="M1 1.5h3M5 1.5h3M1 16.5h3M5 16.5h3M4.5 2V16" stroke="#111" stroke-width="2.4" fill="none"/><path d="M1.5 1.5h3M4.5 1.5h3M1.5 16.5h3M4.5 16.5h3M4.5 1.5V16.5" stroke="#D8DDD8" stroke-width="1" fill="none"/></svg>
</div>
<svg class="a" style="left:917px;top:90px;" width="11" height="11" viewBox="0 0 11 11"><circle cx="5.5" cy="5.5" r="5.3" fill="#B5433E"/><path d="M5.5 2.3V6.3" stroke="#2B2B2B" stroke-width="1.8"/><circle cx="5.5" cy="8.5" r="0.9" fill="#2B2B2B"/></svg>
<div class="a" style="left:930.5px;top:88.50px;font-size:13px;line-height:16px;color:#BBBBBB;font-family:'Liberation Sans';">7</div>
<svg class="a" style="left:946px;top:89px;" width="13" height="12" viewBox="0 0 13 12"><path d="M6.5 0.5L12.5 11.5H0.5Z" fill="#D3862B"/><path d="M6.5 4V7.8" stroke="#2B2B2B" stroke-width="1.6"/><circle cx="6.5" cy="9.6" r="0.8" fill="#2B2B2B"/></svg>
<div class="a" style="left:960px;top:88.50px;font-size:13px;line-height:16px;color:#BBBBBB;font-family:'Liberation Sans';">7</div>
<svg class="a" style="left:976px;top:89px;" width="13" height="12" viewBox="0 0 13 12"><path d="M6.5 0.5L12.5 11.5H0.5Z" fill="#7C7D61"/><path d="M6.5 4V7.8" stroke="#2B2B2B" stroke-width="1.6"/><circle cx="6.5" cy="9.6" r="0.8" fill="#2B2B2B"/></svg>
<div class="a" style="left:991px;top:88.50px;font-size:13px;line-height:16px;color:#BBBBBB;font-family:'Liberation Sans';">1</div>
<svg class="a" style="left:1008px;top:92px;" width="10" height="6" viewBox="0 0 10 6"><path d="M0.8 5.2L5 1L9.2 5.2" stroke="#AFB1B3" stroke-width="1.3" fill="none"/></svg>
<svg class="a" style="left:1029px;top:92px;" width="10" height="6" viewBox="0 0 10 6"><path d="M0.8 0.8L5 5L9.2 0.8" stroke="#AFB1B3" stroke-width="1.3" fill="none"/></svg>
<div class="a" style="left:1046px;top:56px;width:1px;height:573px;background:#323232;"></div>
<svg class="a" style="left:1051.5px;top:66px;" width="12" height="13" viewBox="0 0 12 13"><ellipse cx="6" cy="2.5" rx="5.5" ry="2.2" fill="#AFB1B3"/><path d="M0.5 4.5v2.5q5.5 3 11 0v-2.5q-5.5 3-11 0zM0.5 8.5v2.5q5.5 3 11 0v-2.5q-5.5 3-11 0z" fill="#AFB1B3"/></svg>
<div class="a" style="left:1063.5px;top:83px;font-size:11.5px;line-height:13.5px;color:#BBBBBB;transform-origin:0 0;transform:rotate(90deg)">Database</div>
<svg class="a" style="left:1051.5px;top:153px;" width="12" height="10" viewBox="0 0 12 10"><path d="M0 0h2v2h-2zM0 4h2v2h-2zM0 8h2v2h-2zM3.5 0h8.5v2h-8.5zM3.5 4h8.5v2h-8.5zM3.5 8h8.5v2h-8.5z" fill="#AFB1B3"/><path d="M6.5 0v10M9 0v10" stroke="#3C3F41" stroke-width="0.8"/></svg>
<div class="a" style="left:1063.5px;top:166.5px;font-size:11.5px;line-height:13.5px;color:#BBBBBB;transform-origin:0 0;transform:rotate(90deg)">SciView</div>
<div class="a" style="left:0px;top:629px;width:1065px;height:1px;background:#323232;"></div>
<div class="a" style="left:0px;top:651px;width:1065px;height:1px;background:#47494B;"></div>
<svg class="a" style="left:30px;top:636px;" width="11" height="11" viewBox="0 0 11 11"><circle cx="5.5" cy="5.5" r="5.3" fill="#D0694D"/><path d="M5.5 2.3V6.3" stroke="#3C3F41" stroke-width="1.8"/><circle cx="5.5" cy="8.5" r="0.9" fill="#3C3F41"/></svg>
<div class="a" style="left:46.5px;top:634.84px;font-size:12px;line-height:14px;color:#BBBBBB;font-family:'Liberation Sans';">Problems</div>
<svg class="a" style="left:119px;top:636px;" width="10" height="12" viewBox="0 0 10 12"><circle cx="2" cy="1.8" r="1.8" fill="#AFB1B3"/><circle cx="2" cy="10.2" r="1.8" fill="#AFB1B3"/><circle cx="8" cy="2.5" r="1.8" fill="#AFB1B3"/><path d="M2 2V10M8 3Q8 7 2 8" stroke="#AFB1B3" stroke-width="1.8" fill="none"/></svg>
<div class="a" style="left:133.5px;top:634.84px;font-size:12px;line-height:14px;color:#BBBBBB;font-family:'Liberation Sans';">Version Control</div>
<svg class="a" style="left:238px;top:635px;" width="13" height="13" viewBox="0 0 13 13"><path d="M9.5 2.5A5 5 0 1 0 6 11.5" stroke="#AFB1B3" stroke-width="1.4" fill="none"/><path d="M6 3.5V6.5L8 8" stroke="#AFB1B3" stroke-width="1.2" fill="none"/><path d="M8 7L13 10L8 13z" fill="#AFB1B3"/></svg>
<div class="a" style="left:255px;top:634.84px;font-size:12px;line-height:14px;color:#BBBBBB;font-family:'Liberation Sans';">Profiler</div>
<svg class="a" style="left:314px;top:635px;" width="13" height="12" viewBox="0 0 13 12"><rect x="0" y="0" width="13" height="12" fill="#AFB1B3"/><path d="M2.5 3L5 5.5L2.5 8" stroke="#3C3F41" stroke-width="1.3" fill="none"/><path d="M6 9H10" stroke="#3C3F41" stroke-width="1.3"/></svg>
<div class="a" style="left:330.5px;top:634.84px;font-size:12px;line-height:14px;color:#BBBBBB;font-family:'Liberation Sans';">Terminal</div>
<svg class="a" style="left:397px;top:636px;" width="11" height="10" viewBox="0 0 11 10"><path d="M0 1h2M0 5h2M0 9h2M3.5 1h7.5M3.5 5h7.5M3.5 9h7.5" stroke="#AFB1B3" stroke-width="1.5"/></svg>
<div class="a" style="left:412px;top:634.84px;font-size:12px;line-height:14px;color:#BBBBBB;font-family:'Liberation Sans';">TODO</div>
<svg class="a" style="left:463px;top:635px;" width="13" height="13" viewBox="0 0 13 13"><path d="M1 4L5 0.5L8 3L5.5 6z" fill="#AFB1B3"/><path d="M5 4L12 11.5" stroke="#AFB1B3" stroke-width="2.2"/></svg>
<div class="a" style="left:480px;top:634.84px;font-size:12px;line-height:14px;color:#BBBBBB;font-family:'Liberation Sans';">Build</div>
<svg class="a" style="left:529px;top:634px;" width="13" height="14" viewBox="0 0 13 14"><path d="M6.5 0.5L12.5 3.5L6.5 6.5L0.5 3.5Z" fill="#AFB1B3"/><path d="M0.5 6.5L6.5 9.5L12.5 6.5M0.5 9.5L6.5 12.5L12.5 9.5" stroke="#AFB1B3" stroke-width="1.3" fill="none"/></svg>
<div class="a" style="left:546px;top:634.84px;font-size:12px;line-height:14px;color:#BBBBBB;font-family:'Liberation Sans';letter-spacing:-0.25px;">Python Packages</div>
<svg class="a" style="left:967px;top:635px;" width="14" height="14" viewBox="0 0 14 14"><path d="M6.7 0.7A6 6 0 1 0 6.7 12.7H12.7V6.7A6 6 0 0 0 6.7 0.7Z" fill="none" stroke="#AFB1B3" stroke-width="1.3"/></svg>
<div class="a" style="left:984px;top:634.84px;font-size:12px;line-height:14px;color:#BBBBBB;font-family:'Liberation Sans';">Event Log</div>
<svg class="a" style="left:3px;top:656px;" width="13" height="12" viewBox="0 0 13 12"><rect x="3.5" y="0.5" width="9" height="8" fill="none" stroke="#AFB1B3"/><path d="M0.5 3v8.5h9" stroke="#AFB1B3" fill="none"/></svg>
<div class="a" style="left:24.5px;top:654.84px;font-size:12px;line-height:14px;color:#BBBBBB;font-family:'Liberation Sans';">Cannot resolve symbol 'name'</div>
<div class="a" style="left:828px;top:654.84px;font-size:12px;line-height:14px;color:#BBBBBB;font-family:'Liberation Sans';">14:15</div>
<div class="a" style="left:871px;top:654.84px;font-size:12px;line-height:14px;color:#BBBBBB;font-family:'Liberation Sans';">CRLF</div>
<div class="a" style="left:911px;top:654.84px;font-size:12px;line-height:14px;color:#BBBBBB;font-family:'Liberation Sans';">UTF-8</div>
<div class="a" style="left:957px;top:654.84px;font-size:12px;line-height:14px;color:#BBBBBB;font-family:'Liberation Sans';">4 spaces</div>
<svg class="a" style="left:1018px;top:656px;" width="12" height="12" viewBox="0 0 12 12"><path d="M2.5 5.5V3.5a2.5 2.5 0 0 1 5 0" stroke="#AFB1B3" stroke-width="1.3" fill="none"/><rect x="4" y="5.5" width="8" height="6.5" fill="#AFB1B3"/></svg>
<svg class="a" style="left:1042px;top:655px;" width="17" height="15" viewBox="0 0 17 15"><circle cx="6.5" cy="6.2" r="6" fill="#AFB1B3"/><circle cx="10.5" cy="8.5" r="4" fill="#AFB1B3"/><text x="6.3" y="10.2" text-anchor="middle" font-family="Liberation Sans" font-weight="bold" font-size="10" fill="#3C3F41">?</text><circle cx="12.8" cy="11.5" r="3.3" fill="#3C3F41"/><circle cx="12.8" cy="11.5" r="2.3" fill="none" stroke="#AFB1B3" stroke-width="1.4" stroke-dasharray="1.2 0.6"/></svg>
</body></html>
